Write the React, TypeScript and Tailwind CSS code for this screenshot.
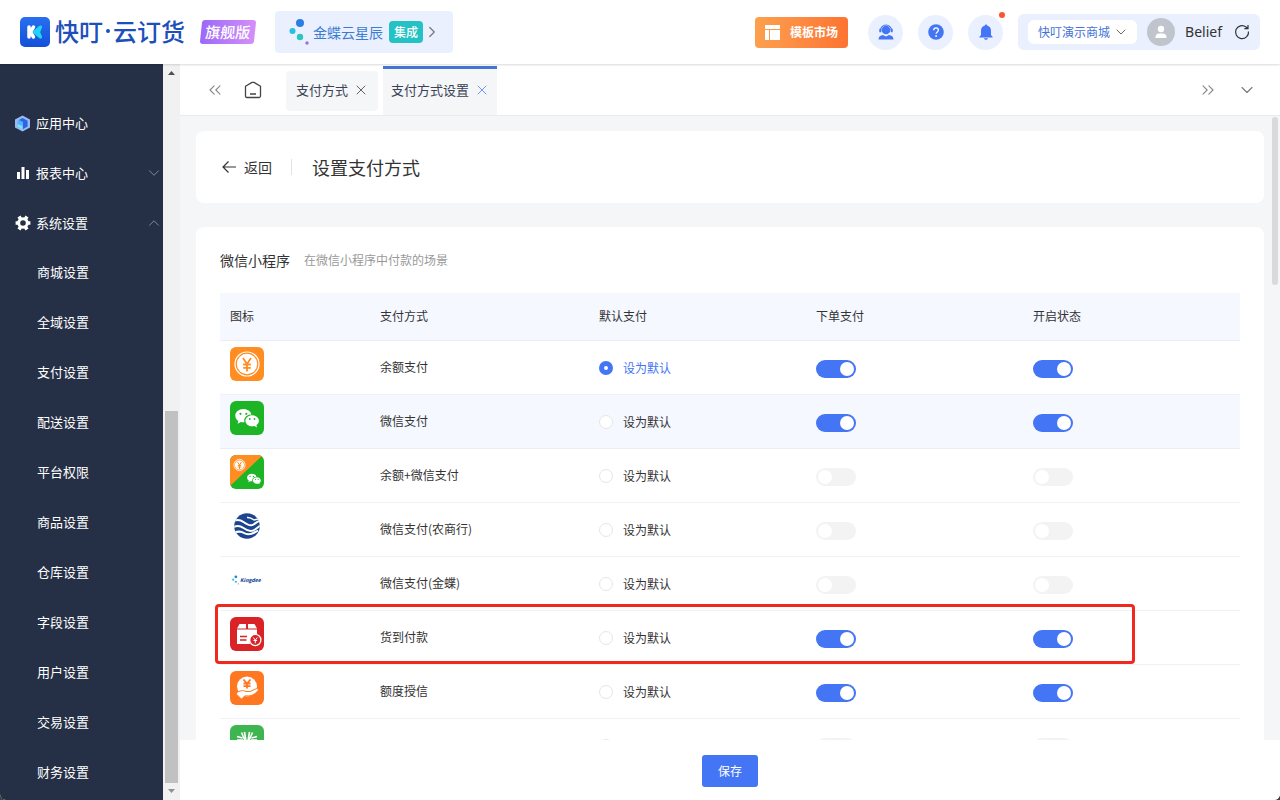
import { useState } from "react";
import type { ReactNode } from "react";
import { ChevronDown, ChevronRight, ChevronUp, ChevronsLeft, ChevronsRight, X } from "lucide-react";

const subMenus = [
  "商城设置",
  "全域设置",
  "支付设置",
  "配送设置",
  "平台权限",
  "商品设置",
  "仓库设置",
  "字段设置",
  "用户设置",
  "交易设置",
  "财务设置",
];

type Method = { id: string; name: string; icon: ReactNode; order: boolean; enabled: boolean };

function KingdeeDots({ className }: { className?: string }) {
  return (
    <svg viewBox="0 0 20 28" className={className} aria-hidden="true">
      <circle cx="11" cy="5" r="4" fill="#2b7de2" />
      <circle cx="3.5" cy="13" r="3" fill="#27bfe4" />
      <circle cx="11" cy="19" r="3.2" fill="#2cc5c2" />
      <circle cx="18" cy="25" r="1.7" fill="#9b6fe0" />
    </svg>
  );
}

function WechatBubbles() {
  return (
    <>
      <path
        fill="#fff"
        d="M13.300 8C8.800 8 5.300 11 5.300 14.700c0 2.100 1.200 4 3 5.200L7.600 22.800l3.300-1.800c.8.2 1.600.3 2.400.3.400 0 .8 0 1.200-.1a6 6 0 0 1-.3-1.700c0-3.400 3.200-6.100 7.100-6.100h.1C20.700 10.300 17.400 8 13.300 8z"
      />
      <path
        fill="#fff"
        d="M28.900 19.700c0-3-3-5.500-6.700-5.500s-6.800 2.500-6.800 5.500 3 5.600 6.800 5.600c.8 0 1.600-.1 2.300-.4l2.500 1.500-.6-2.300c1.500-1 2.500-2.600 2.500-4.400z"
      />
      <g fill="#1db526">
        <circle cx="10.5" cy="12.8" r="1.1" />
        <circle cx="16.3" cy="12.8" r="1.1" />
        <circle cx="19.8" cy="18" r=".9" />
        <circle cx="24.5" cy="18" r=".9" />
      </g>
    </>
  );
}

function Tile({ children }: { children: ReactNode }) {
  return (
    <svg viewBox="0 0 34 34" className="size-[34px] rounded-md" aria-hidden="true">
      {children}
    </svg>
  );
}

const methods: Method[] = [
  {
    id: "balance",
    name: "余额支付",
    order: true,
    enabled: true,
    icon: (
      <Tile>
        <rect width="34" height="34" fill="#ff8d22" />
        <circle cx="17" cy="17" r="12" fill="none" stroke="#fff" strokeWidth="1.2" />
        <circle cx="17" cy="17" r="10.2" fill="#fff" />
        <path d="M13 11l4 6 4-6M17 17v7.500M13.200 17.500h7.600M13.200 20.800h7.600" fill="none" stroke="#ff8d22" strokeWidth="1.8" />
      </Tile>
    ),
  },
  {
    id: "wechat",
    name: "微信支付",
    order: true,
    enabled: true,
    icon: (
      <Tile>
        <rect width="34" height="34" fill="#1db526" />
        <WechatBubbles />
      </Tile>
    ),
  },
  {
    id: "balance-wechat",
    name: "余额+微信支付",
    order: false,
    enabled: false,
    icon: (
      <Tile>
        <rect width="34" height="34" fill="#1db526" />
        <path d="M0 0h33L0 31z" fill="#ff8d22" />
        <circle cx="9.5" cy="10" r="5.6" fill="none" stroke="#fff" strokeWidth=".8" />
        <circle cx="9.5" cy="10" r="4.6" fill="#fff" />
        <path d="M7.500 7l2 3 2-3M9.500 10v4M7.700 10.400h3.600M7.700 12h3.600" fill="none" stroke="#ff8d22" strokeWidth="1" />
        <g transform="translate(14 14) scale(.58)">
          <WechatBubbles />
        </g>
      </Tile>
    ),
  },
  {
    id: "rural-bank",
    name: "微信支付(农商行)",
    order: false,
    enabled: false,
    icon: (
      <Tile>
        <clipPath id="bank-disc">
          <circle cx="17" cy="17" r="12.8" />
        </clipPath>
        <g clipPath="url(#bank-disc)">
          <rect width="34" height="34" fill="#1d458f" />
          <g fill="none" stroke="#fff" strokeWidth="2">
            <path d="M3 12.500c4-2.500 7-2 10.500.5 4 3 7 4.500 10 2.500 2-1.300 4-3 8-5" />
            <path d="M3 18.500c4-2.500 7-2 10.500.5 4 3 8 4 11.500 1.500l6-4.500" />
            <path d="M3 24c5-2 8-2 11 0 3.500 2.500 8 1.500 14-2.500" />
            <path d="M17 8.500c3-.5 5 1 7 2.500l4-1" strokeWidth="1.500" />
          </g>
        </g>
      </Tile>
    ),
  },
  {
    id: "kingdee",
    name: "微信支付(金蝶)",
    order: false,
    enabled: false,
    icon: (
      <div className="flex size-[34px] items-center gap-px pl-0.5" aria-hidden="true">
        <KingdeeDots className="h-[10px] w-[7px]" />
        <span className="text-[5px] leading-none font-black text-[#1d4da0] italic">Kingdee</span>
      </div>
    ),
  },
  {
    id: "cod",
    name: "货到付款",
    order: true,
    enabled: true,
    icon: (
      <Tile>
        <rect width="34" height="34" fill="#d92327" />
        <path d="M9.500 7h6.500v4.500H7zM18 7h6.500l2.500 4.500h-9zM7 12.500h20v7.200A6 6 0 0 0 20 27H7z" fill="#fff" />
        <path d="M10 19.500h7M10 23h6.500" stroke="#d92327" strokeWidth="1.6" />
        <circle cx="25.3" cy="23" r="5.6" fill="#d92327" stroke="#fff" strokeWidth="1.3" />
        <path d="M23.300 20.500l2 2.700 2-2.700M25.300 23v3.300M23.500 23.500h3.600" fill="none" stroke="#fff" strokeWidth="1" />
      </Tile>
    ),
  },
  {
    id: "credit",
    name: "额度授信",
    order: true,
    enabled: true,
    icon: (
      <Tile>
        <rect width="34" height="34" fill="#ff7720" />
        <circle cx="17" cy="15.5" r="10" fill="#fff" />
        <path
          d="M6.500 22c3-2.500 6.500-3 9.500-1.500h4l6-2.700c2-.8 3.200.8 1.700 2.300-3 3.200-5.700 4.800-9 4.800h-4l-3.200 3.300-5-5z"
          fill="#fff"
          stroke="#ff7720"
          strokeWidth="1"
        />
        <path d="M13.500 8.500l3.500 4.200 3.500-4.200M17 12.500v5M13.500 12.500h7M13.500 15.200h7" fill="none" stroke="#ff7720" strokeWidth="1.8" />
      </Tile>
    ),
  },
  {
    id: "cash",
    name: "",
    order: false,
    enabled: false,
    icon: (
      <Tile>
        <rect width="34" height="34" fill="#3fb552" />
        <path d="M11.500 7.500l3.500 8M14.500 7l1.500 9M22.500 7.500l-3.500 8M19.500 7L18 16M7 11.500l5.500 1.500M7 15h6M27 11.500L21.500 13M27 15h-6" fill="none" stroke="#fff" strokeWidth="1.6" />
      </Tile>
    ),
  },
];

function Switch({ label, defaultChecked }: { label: string; defaultChecked: boolean }) {
  return (
    <input
      type="checkbox"
      role="switch"
      aria-label={label}
      defaultChecked={defaultChecked}
      className="mt-[3px] block h-[18px] w-10 cursor-pointer appearance-none rounded-full bg-[#f3f3f3] before:mt-0.5 before:ml-0.5 before:block before:size-[14px] before:rounded-full before:bg-white checked:bg-[#4475f5] checked:before:ml-6"
    />
  );
}

function Header() {
  return (
    <header className="relative z-10 flex h-16 shrink-0 items-center bg-white px-5 shadow-[0_1px_2px_rgba(0,0,0,0.15)]">
      <svg viewBox="0 0 30 30" className="size-[30px]" aria-hidden="true">
        <defs>
          <linearGradient id="brand" x1="0" y1="0" x2="0" y2="1">
            <stop offset="0" stopColor="#2a6ff0" />
            <stop offset="1" stopColor="#1250d8" />
          </linearGradient>
        </defs>
        <rect width="30" height="30" rx="5" fill="url(#brand)" />
        <path d="M9 10v10M13.500 10l-3 5 3 5" fill="none" stroke="#fff" strokeWidth="3.5" strokeLinecap="round" strokeLinejoin="round" />
        <path d="M20.500 10L14.500 15l6 5-2-5z" fill="#22d3f5" stroke="#22d3f5" strokeWidth="3.2" strokeLinejoin="round" />
      </svg>
      <div className="ml-[5px] flex items-center pb-0.5 text-2xl font-medium text-[#1d50ba]">
        <span>快叮</span>
        <span className="mx-[3px] size-1 rounded-full bg-[#1d50ba]" />
        <span>云订货</span>
      </div>
      <span className="ml-4 flex h-6 w-[54px] -skew-x-6 items-center justify-center rounded-[3px] bg-linear-to-r from-[#9d68f8] to-[#d48ff8] text-[15px] font-medium text-white">
        旗舰版
      </span>
      <a href="#kingdee" className="ml-5 flex h-[42px] items-center rounded bg-[#eaf0fe] pr-3 pl-3.5 text-sm text-[#3b7cd3]">
        <KingdeeDots className="h-7 w-5" />
        <span className="ml-1">金蝶云星辰</span>
        <span className="ml-1.5 flex h-[22px] w-[34px] items-center justify-center rounded bg-[#24c2c4] text-xs font-medium text-white">集成</span>
        <ChevronRight size={18} strokeWidth={1.6} className="text-[#777]" />
      </a>

      <div className="ml-auto flex items-center">
        <button type="button" className="flex h-[31px] items-center gap-2.5 rounded bg-linear-to-r from-[#fca04e] to-[#fd7332] px-2.5 text-xs font-bold text-white">
          <svg viewBox="0 0 15 15" className="size-[15px]" fill="#fff" aria-hidden="true">
            <path d="M0 0h15v4H0zM0 5h4v10H0zM5 5h10v10H5z" />
          </svg>
          模板市场
        </button>
        <button type="button" aria-label="客服" className="ml-5 flex size-[35px] items-center justify-center rounded-full bg-[#eaf0fe]">
          <svg viewBox="0 0 16 16" className="size-4" aria-hidden="true">
            <circle cx="8" cy="6" r="4.3" fill="#4475f5" />
            <path d="M2.500 6.500a5.500 5.500 0 0 1 11 0" fill="none" stroke="#4475f5" strokeWidth="1.2" />
            <path d="M1.300 4.800h2v3.400h-2zM12.700 4.800h2v3.400h-2zM.5 15.500c0-3 2-4 4.500-4.500l3 1.500 3-1.500c2.500.5 4.500 1.500 4.500 4.500z" fill="#4475f5" />
          </svg>
        </button>
        <button type="button" aria-label="帮助" className="ml-[15px] flex size-[35px] items-center justify-center rounded-full bg-[#eaf0fe]">
          <svg viewBox="0 0 16 16" className="size-4" fill="none" aria-hidden="true">
            <circle cx="8" cy="8" r="7.8" fill="#4475f5" />
            <path d="M5.700 6.200c0-3 4.700-3 4.700 0 0 1.700-2.300 1.700-2.300 3.600" stroke="#fff" strokeWidth="1.3" />
            <circle cx="8.1" cy="12" r=".9" fill="#fff" />
          </svg>
        </button>
        <button type="button" aria-label="通知" className="relative ml-[15px] flex size-[35px] items-center justify-center rounded-full bg-[#eaf0fe]">
          <svg viewBox="0 0 16 16" className="size-4" fill="#4475f5" aria-hidden="true">
            <path d="M8 .5c.7 0 1.100.5 1.100 1.100C11.500 2.200 13 4 13 6.500V11l1.700 2v.6H1.300V13L3 11V6.500C3 4 4.500 2.200 6.900 1.600 6.900 1 7.300.5 8 .5zM6 14.300h4c0 .9-.8 1.500-2 1.500s-2-.6-2-1.500z" />
          </svg>
          <span className="absolute -top-[3px] -right-0.5 size-1.5 rounded-full bg-[#fb5430]" />
        </button>
        <div className="ml-[15px] flex h-9 items-center rounded-md bg-[#eaf0fe] px-2.5">
          <div className="relative">
            <select aria-label="商城" className="block h-6 appearance-none rounded-md bg-white pr-[26px] pl-2.5 text-xs text-[#4472d8]">
              <option>快叮演示商城</option>
            </select>
            <ChevronDown size={16} strokeWidth={1.5} className="pointer-events-none absolute top-1 right-2 text-[#666]" />
          </div>
          <span className="ml-2.5 flex size-7 items-center justify-center rounded-full bg-[#c0c4cc]">
            <svg viewBox="0 0 14 14" className="size-3.5" fill="#fff" aria-hidden="true">
              <circle cx="7" cy="4" r="3.2" />
              <path d="M1.500 13v-1c0-2.300 1.500-3.500 3.500-3.500h4c2 0 3.500 1.200 3.500 3.500v1z" />
            </svg>
          </span>
          <span className="ml-2.5 font-['Noto_Sans'] text-sm text-[#333]">Belief</span>
          <button type="button" aria-label="刷新" className="ml-3">
            <svg viewBox="0 0 16 16" className="size-4" fill="none" stroke="#333" strokeWidth="1.2" aria-hidden="true">
              <path d="M14.500 7.500A6.500 6.500 0 1 1 12 3l1.500 1.300M14 1v3.600h-3.600" />
            </svg>
          </button>
        </div>
      </div>
    </header>
  );
}

function Sidebar() {
  return (
    <aside className="flex shrink-0">
      <nav className="w-[163px] overflow-hidden bg-[#252f45] pt-[34px] text-[13px] text-white">
        <a href="#apps" className="flex h-[50px] items-center gap-[5px] pl-3.5">
          <svg viewBox="0 0 17 17" className="size-[17px]" aria-hidden="true">
            <path d="M8.500.5l7.500 4v8l-7.500 4-7.500-4v-8z" fill="#9db9f2" />
            <path d="M8.500 3l5 2.800v5.700l-5 3-5-3V5.800z" fill="#55b4f7" />
            <path d="M8.500 3l5 2.800v5.700L9 14V7L5 4.900z" fill="#2f62e4" />
            <path d="M3.500 9v2.500l5 3V11z" fill="#7be0fb" />
          </svg>
          应用中心
        </a>
        <a href="#reports" className="flex h-[50px] items-center gap-1.5 pl-4">
          <svg viewBox="0 0 14 14" className="size-3.5" fill="#fff" aria-hidden="true">
            <path d="M1 6h3v7H1zM5.500 1h3v12h-3zM10 4h3v9h-3z" />
          </svg>
          报表中心
          <ChevronDown size={18} strokeWidth={1.2} className="ml-auto text-[#8c93a1]" />
        </a>
        <a href="#settings" className="flex h-[49px] items-center gap-[5px] pl-[15px]">
          <svg viewBox="0 0 16 16" className="size-4" aria-hidden="true">
            <circle cx="8" cy="8" r="4.3" fill="none" stroke="#fff" strokeWidth="3" />
            <path
              d="M4 1.500l1.600 2.600M12 1.500l-1.600 2.600M4 14.500l1.600-2.600M12 14.500l-1.600-2.600M.6 8h3M12.400 8h3"
              fill="none"
              stroke="#fff"
              strokeWidth="3.6"
            />
          </svg>
          系统设置
          <ChevronUp size={18} strokeWidth={1.2} className="ml-auto text-[#8c93a1]" />
        </a>
        {subMenus.map((name) => (
          <a key={name} href="#settings" className="flex h-[50px] items-center pl-[37px]">
            {name}
          </a>
        ))}
      </nav>
      <div className="flex w-[17px] flex-col items-center bg-[#f1f1f1]" aria-hidden="true">
        <svg viewBox="0 0 17 17" className="size-[17px]">
          <path d="M5 11h7L8.500 7z" fill="#505050" />
        </svg>
        <div className="flex w-[13px] flex-1 flex-col justify-end">
          <div className="h-[53%] bg-[#c1c1c1]" />
        </div>
        <svg viewBox="0 0 17 17" className="size-[17px]">
          <path d="M5 6h7l-3.500 4z" fill="#909090" />
        </svg>
      </div>
    </aside>
  );
}

function TabBar() {
  return (
    <div className="flex h-[52px] shrink-0 items-center border-b border-[#e9ebee] bg-white pt-0.5 text-[13px] text-[#3a4256]">
      <button type="button" aria-label="向左" className="ml-[25px] pb-0.5">
        <ChevronsLeft size={20} strokeWidth={1.3} className="text-[#888]" />
      </button>
      <button type="button" aria-label="首页" className="ml-[19px] pb-0.5">
        <svg viewBox="0 0 18 18" className="size-[18px]" fill="none" stroke="#444" strokeWidth="1.3" strokeLinejoin="round" aria-hidden="true">
          <path d="M1.500 5.300L8 1.400h2l6.500 3.900V15c0 1-.5 1.500-1.500 1.500H3c-1 0-1.500-.5-1.500-1.500zM6 13h6" />
        </svg>
      </button>
      <div className="ml-6 flex h-10 items-center gap-[5px] rounded bg-[#f5f6f8] pr-[9px] pb-0.5 pl-2.5">
        <a href="#pay">支付方式</a>
        <button type="button" aria-label="关闭支付方式">
          <X size={16} strokeWidth={1.4} className="text-[#555]" />
        </button>
      </div>
      <div className="ml-[5px] flex h-full items-center gap-[5px] border-t-[3px] border-[#4475d2] bg-[#f5f6f8] pr-[7px] pb-1 pl-2">
        <a href="#pay-settings">支付方式设置</a>
        <button type="button" aria-label="关闭支付方式设置">
          <X size={16} strokeWidth={1.4} className="text-[#6b8ff0]" />
        </button>
      </div>
      <button type="button" aria-label="向右" className="ml-auto pb-0.5">
        <ChevronsRight size={20} strokeWidth={1.3} className="text-[#888]" />
      </button>
      <button type="button" aria-label="更多标签" className="mr-[23px] ml-[19px] pb-0.5">
        <ChevronDown size={20} strokeWidth={1.3} className="text-[#777]" />
      </button>
    </div>
  );
}

function PaymentTable() {
  const [selected, setSelected] = useState("balance");

  return (
    <div className="relative mt-[23px]">
      <table className="w-full table-fixed text-left text-xs text-[#333]">
        <thead>
          <tr className="h-[47px] border-b border-[#ebeef5] bg-[#f5f8ff]">
            <th className="w-[150px] pl-2.5 font-normal">图标</th>
            <th className="w-[219px] pl-2.5 font-normal">支付方式</th>
            <th className="pl-2.5 font-normal">默认支付</th>
            <th className="pl-2.5 font-normal">下单支付</th>
            <th className="pl-2.5 font-normal">开启状态</th>
          </tr>
        </thead>
        <tbody>
          {methods.map((m) => (
            <tr key={m.id} className={m.id === "wechat" ? "h-[54px] border-b border-[#ebeef5] bg-[#f5f8ff]" : "h-[54px] border-b border-[#f0f1f4]"}>
              <td className="pt-1.5 pl-2.5 align-top">{m.icon}</td>
              <td className="pl-2.5">{m.name}</td>
              <td className="pt-px pl-2.5">
                <label className={selected === m.id ? "flex w-fit items-center gap-2.5 text-[#4475f5]" : "flex w-fit items-center gap-2.5"}>
                  <input
                    type="radio"
                    name="default-pay"
                    aria-label="设为默认"
                    checked={selected === m.id}
                    onChange={() => setSelected(m.id)}
                    className="size-[14px] appearance-none rounded-full border border-[#e4e6ea] bg-white checked:border-[5px] checked:border-[#4475f5]"
                  />
                  {m.name && "设为默认"}
                </label>
              </td>
              <td className="pl-2.5">
                <Switch label={`${m.name}下单支付`} defaultChecked={m.order} />
              </td>
              <td className="pl-2.5">
                <Switch label={`${m.name}开启状态`} defaultChecked={m.enabled} />
              </td>
            </tr>
          ))}
        </tbody>
      </table>
      {/* 货到付款 highlight */}
      <div className="pointer-events-none absolute top-[311px] right-[105px] -left-[5px] h-[60px] rounded-sm border-[3px] border-[#f0281e]" />
    </div>
  );
}

export default function App() {
  return (
    <div className="h-screen bg-[#3c3f45] font-['Noto_Sans_CJK_SC',sans-serif]">
      <div className="flex h-full flex-col overflow-hidden rounded-b-md bg-white">
        <Header />
        <div className="flex min-h-0 flex-1">
          <Sidebar />
          <main className="flex min-w-0 flex-1 flex-col">
            <TabBar />
            <div className="relative min-h-0 flex-1 overflow-hidden bg-[#f5f6f8] px-4 pt-[15px]">
              <section className="flex h-[72px] items-center rounded-lg bg-white pl-[25px] text-[#333]">
                <button type="button" className="flex items-center gap-[7px] text-sm">
                  <svg viewBox="0 0 16 16" className="size-4" fill="none" stroke="#333" strokeWidth="1.2" aria-hidden="true">
                    <path d="M15 8H2M7.500 2.500L2 8l5.500 5.500" />
                  </svg>
                  返回
                </button>
                <span className="mr-5 ml-[19px] h-4 w-px bg-[#e1e3e8]" />
                <h1 className="text-lg">设置支付方式</h1>
              </section>
              <section className="mt-6 rounded-lg bg-white px-6 pt-[23px] pb-6">
                <div className="flex items-center gap-3.5">
                  <h2 className="text-sm text-[#333]">微信小程序</h2>
                  <p className="text-xs text-[#999]">在微信小程序中付款的场景</p>
                </div>
                <PaymentTable />
              </section>
              <div className="absolute top-px right-0.5 h-[168px] w-1.5 rounded-full bg-[#d9dadc]" />
            </div>
            <footer className="flex h-[60px] shrink-0 items-center justify-center bg-white pt-0.5">
              <button type="button" className="h-8 w-14 rounded-[3px] bg-[#4475f5] text-xs text-white">
                保存
              </button>
            </footer>
          </main>
        </div>
      </div>
    </div>
  );
}
